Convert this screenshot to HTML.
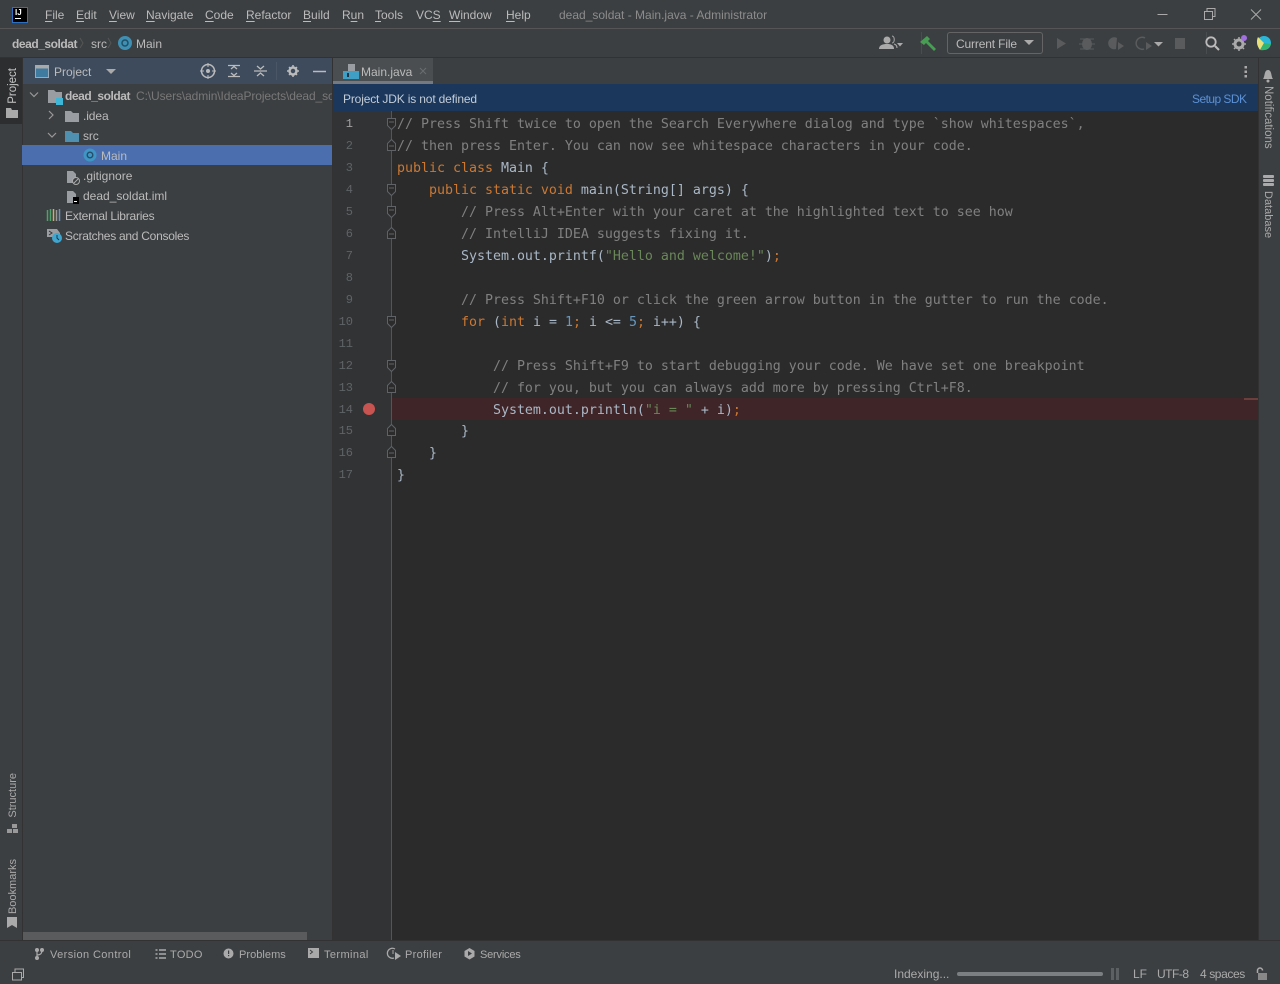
<!DOCTYPE html>
<html><head><meta charset="utf-8"><style>
html,body{margin:0;padding:0;background:#3c3f41}
#r{position:relative;width:1280px;height:984px;overflow:hidden;background:#3c3f41;font-family:"Liberation Sans",sans-serif;font-size:12px;color:#bbb}
.a{position:absolute}
.t{position:absolute;white-space:pre;line-height:16px}
.m u{text-underline-offset:2px}
.c{position:absolute;left:397px;white-space:pre;font-family:"DejaVu Sans Mono",monospace;font-size:13.29px;line-height:22px;height:22px;color:#a9b7c6}
.n{position:absolute;left:333px;width:20px;text-align:right;font-family:"Liberation Mono",monospace;font-size:12px;line-height:22px;color:#606366}
.g{color:#808080}.k{color:#cc7832}.s{color:#6a8759}.d{color:#6897bb}
.v{position:absolute;writing-mode:vertical-rl;white-space:pre;font-size:11.5px;line-height:14px;color:#aaa}
.l{transform:rotate(180deg)}
.b{font-size:11px;letter-spacing:.3px;color:#aaa;top:947px}
svg{position:absolute;overflow:visible}
</style></head><body><div id="r">

<!-- title bar -->
<div class="a" style="left:0;top:0;width:1280px;height:28px;background:#3c3f41"></div>
<div class="a" style="left:0;top:28px;width:1280px;height:1px;background:#555"></div>
<div class="a" style="left:12px;top:7px;width:14px;height:14px;background:#000;border:1px solid #2d6fc0"></div>
<div class="a" style="left:15px;top:8px;color:#fff;font:bold 8px/10px 'Liberation Sans',sans-serif">IJ</div>
<div class="a" style="left:15px;top:18px;width:6px;height:1px;background:#fff"></div>
<div class="m">
<div class="t" style="left:45px;top:7px"><u>F</u>ile</div>
<div class="t" style="left:76px;top:7px"><u>E</u>dit</div>
<div class="t" style="left:109px;top:7px"><u>V</u>iew</div>
<div class="t" style="left:146px;top:7px"><u>N</u>avigate</div>
<div class="t" style="left:205px;top:7px"><u>C</u>ode</div>
<div class="t" style="left:246px;top:7px"><u>R</u>efactor</div>
<div class="t" style="left:303px;top:7px"><u>B</u>uild</div>
<div class="t" style="left:342px;top:7px">R<u>u</u>n</div>
<div class="t" style="left:375px;top:7px"><u>T</u>ools</div>
<div class="t" style="left:416px;top:7px">VC<u>S</u></div>
<div class="t" style="left:449px;top:7px"><u>W</u>indow</div>
<div class="t" style="left:506px;top:7px"><u>H</u>elp</div>
</div>
<div class="t" style="left:559px;top:7px;color:#8c8c8c;font-size:12px">dead_soldat - Main.java - Administrator</div>
<svg style="left:0;top:0" width="1280" height="28" fill="none" stroke="#aaa">
<path d="M1157.500 14.500h10"/><path d="M1204.500 11.500h8v8h-8zM1207 11v-2.500h8v8h-2.500"/><path d="M1251 9.500l10 10M1261 9.500l-10 10"/>
</svg>

<!-- nav bar -->
<div class="t" style="left:12px;top:36px;font-weight:bold;font-size:12px;letter-spacing:-.45px;color:#bbb">dead_soldat</div>
<div class="t" style="left:91px;top:36px;font-size:12px">src</div>
<svg style="left:0;top:29px" width="130" height="28" fill="none" stroke="#555"><path d="M80 9l3 5-3 5M108 9l3 5-3 5"/></svg>
<svg style="left:118px;top:36px" width="14" height="14"><circle cx="7" cy="7" r="7" fill="#3f8fb3"/><circle cx="7" cy="7" r="3" fill="none" stroke="#1f4f66" stroke-width="1.500"/></svg>
<div class="t" style="left:136px;top:36px">Main</div>
<div class="a" style="left:0;top:57px;width:1280px;height:1px;background:#323232"></div>

<!-- toolbar -->
<svg style="left:870px;top:29px" width="410" height="28">
<circle cx="17" cy="11" r="3.500" fill="#aaa"/><path d="M9 20c0-4 4-5 8-5s7 1 7 5z" fill="#aaa"/><path d="M22 7c3 0 3 7 0 7M24 15c2 .5 3 2 3 4" stroke="#aaa" fill="none"/>
<path d="M27 14h6l-3 3.500z" fill="#aaa"/>
<rect x="51" y="3" width="1" height="22" fill="#4a4d4f"/>
<path d="M50 13l7-6 3 3-2 2 8 8-2 2-8-8-2 2z" fill="#499c54"/>
<rect x="77.500" y="3.500" width="95" height="21" rx="2.500" fill="none" stroke="#646464"/>
<path d="M154 11h10l-5 5z" fill="#aaa"/>
<path d="M187 9l9 5.500-9 5.500z" fill="#595b5d"/>
<ellipse cx="217" cy="15" rx="5" ry="6" fill="#595b5d"/><path d="M210 10l14 0M209 15h16M210 20h14" stroke="#595b5d"/>
<path d="M247 9a6 6 0 1 0-1 11z" fill="#595b5d"/><path d="M248 13l6 4-6 4z" fill="#595b5d"/>
<path d="M275 9a6 6 0 1 0-1 11" fill="none" stroke="#595b5d" stroke-width="1.500"/><path d="M276 13l6 4-6 4z" fill="#595b5d"/>
<path d="M284 13h9l-4.500 4.500z" fill="#aaa"/>
<rect x="305" y="9" width="10" height="11" fill="#595b5d"/>
<rect x="336" y="3" width="1" height="22" fill="#4a4d4f"/>
<circle cx="341" cy="13" r="4.700" fill="none" stroke="#bbb" stroke-width="1.800"/><path d="M345 17l4 4" stroke="#bbb" stroke-width="2"/>
<circle cx="369" cy="15" r="4" fill="none" stroke="#aaa" stroke-width="3"/>
<path d="M369 8v3M369 19v3M362 15h3M373 15h3M364 10l2 2M372 18l2 2M364 20l2-2" stroke="#aaa" stroke-width="1.500"/>
<circle cx="374" cy="9" r="3" fill="#a26fe0"/>
<circle cx="394" cy="14" r="7" fill="#2bb6d8"/><path d="M388 8c-2 4-1 9 2 13l4-7z" fill="#e8e07a"/><path d="M394 14l7 1c-1 4-6 7-11 6z" fill="#32b56e"/>
</svg>
<div class="t" style="left:956px;top:36px;color:#bbb;font-size:12px;letter-spacing:-.15px">Current File</div>

<!-- left stripe -->
<div class="a" style="left:0;top:58px;width:22px;height:66px;background:#2c2e30"></div>
<div class="a" style="left:22px;top:58px;width:1px;height:882px;background:#323232"></div>
<div class="v l" style="left:6px;top:68px;color:#c8c8c8">Project</div>
<svg style="left:5px;top:107px" width="14" height="12"><path d="M1 1h5l1 2h6v8H1z" fill="#aaa"/></svg>
<div class="v l" style="left:6px;top:773px;font-size:11px">Structure</div>
<svg style="left:6px;top:823px" width="12" height="12" fill="#999"><rect x="6" y="1" width="5" height="4"/><rect x="1" y="6" width="5" height="4"/><rect x="7" y="6" width="5" height="4"/></svg>
<div class="v l" style="left:6px;top:859px;font-size:11px">Bookmarks</div>
<svg style="left:6px;top:917px" width="12" height="12"><path d="M1 0h10v11l-5-3-5 3z" fill="#aaa"/></svg>

<!-- project panel -->
<div class="a" style="left:23px;top:58px;width:309px;height:26px;background:#3d4b5c"></div>
<svg style="left:23px;top:58px" width="309" height="26" fill="none" stroke="#bbb">
<rect x="12.500" y="7.500" width="13" height="12" fill="#3f7ba0" stroke="#9ab"/><rect x="12.500" y="7.500" width="13" height="3" fill="#aaa" stroke="none"/>
<path d="M83 11h10l-5 5z" fill="#aaa" stroke="none"/>
<circle cx="185" cy="13" r="6.500" stroke-width="1.500"/><circle cx="185" cy="13" r="1.500" fill="#bbb"/><path d="M185 5v4M185 17v4M177 13h4M189 13h4"/>
<path d="M205 7.500h12M205 18.500h12M208 11l3-2.500 3 2.500M208 15l3 2.500 3-2.500" stroke-width="1.300"/>
<path d="M231 13h13M234 8l3.500 3 3.500-3M234 18l3.500-3 3.500 3" stroke-width="1.300"/>
<rect x="253" y="4" width="1" height="18" fill="#4a5566" stroke="none"/>
<circle cx="270" cy="13" r="3.500" stroke-width="2.500"/><path d="M270 7v2M270 17v2M264 13h2M274 13h2M266 9l1 1M273 16l1 1M266 17l1-1M273 10l1-1" stroke-width="1.500"/>
<path d="M290 13.500h13" stroke-width="1.500"/>
</svg>
<div class="t" style="left:54px;top:64px;font-size:12px;color:#bbb">Project</div>

<div class="a" style="left:332px;top:58px;width:1px;height:882px;background:#323232"></div>
<!-- tree -->
<svg style="left:23px;top:85px" width="309" height="160" fill="none" stroke="#999">
<path d="M7 7.500l4 4 4-4" stroke-width="1.200"/>
<path d="M25 5h6l2 2h6v11H25z" fill="#9a9ea3" stroke="none"/><rect x="33" y="13" width="7" height="7" fill="#3fb6d8" stroke="none"/>
<path d="M26 26l4 4-4 4" stroke-width="1.200"/>
<path d="M42 26h6l2 2h6v9H42z" fill="#9a9ea3" stroke="none"/>
<path d="M25 48l4 4 4-4" stroke-width="1.200"/>
<path d="M42 46h6l2 2h6v9H42z" fill="#4f8fb0" stroke="none"/>
<path d="M44 86h6l3 3v9H44z" fill="#9a9ea3" stroke="none"/><circle cx="53" cy="96" r="3.500" fill="#3c3f41" stroke="#aaa"/><path d="M51 98l4-4" stroke="#aaa"/>
<path d="M44 106h6l3 3v9H44z" fill="#9a9ea3" stroke="none"/><rect x="50" y="112" width="6" height="7" fill="#000" stroke="none"/><rect x="51" y="116" width="3" height="1" fill="#fff" stroke="none"/>
<path d="M24.500 125v11M27.500 124v12" stroke="#4f9f6f" stroke-width="1.500"/><path d="M30.500 124v12" stroke="#c9b267" stroke-width="1.500"/><path d="M33.500 125v11" stroke="#999" stroke-width="1.500"/><path d="M36.500 124v12" stroke="#6a93c4" stroke-width="1.500"/>
<path d="M24 144h10l3 4v4H24z" fill="#9a9ea3" stroke="none"/><path d="M26 146l3 2-3 2" stroke="#333"/><circle cx="34" cy="153" r="5" fill="#3fa6cf" stroke="none"/><path d="M34 150v3l2 2" stroke="#234"/>
</svg>
<div class="t" style="left:65px;top:88px;font-weight:bold;font-size:12px;letter-spacing:-.45px">dead_soldat</div>
<div class="t" style="left:136px;top:88px;width:196px;overflow:hidden;font-size:12px;letter-spacing:-.1px;color:#787878">C:\Users\admin\IdeaProjects\dead_soldat</div>
<div class="t" style="left:83px;top:108px;font-size:12px;letter-spacing:-.1px">.idea</div>
<div class="t" style="left:83px;top:128px;font-size:12px;letter-spacing:-.1px">src</div>
<div class="a" style="left:22px;top:145px;width:310px;height:20px;background:#4b6eaf"></div>
<svg style="left:83px;top:148px" width="14" height="14"><circle cx="7" cy="7" r="6.500" fill="#3f95c4"/><circle cx="7" cy="7" r="2.800" fill="none" stroke="#274d68" stroke-width="1.400"/></svg>
<div class="t" style="left:101px;top:148px;font-size:12px">Main</div>
<div class="t" style="left:83px;top:168px;font-size:12px">.gitignore</div>
<div class="t" style="left:83px;top:188px;font-size:12px">dead_soldat.iml</div>
<div class="t" style="left:65px;top:208px;font-size:12px;letter-spacing:-.22px">External Libraries</div>
<div class="t" style="left:65px;top:228px;font-size:12px;letter-spacing:-.27px">Scratches and Consoles</div>
<div class="a" style="left:23px;top:932px;width:284px;height:8px;background:#595b5d"></div>

<!-- tabs -->
<div class="a" style="left:333px;top:58px;width:925px;height:26px;background:#3c3f41"></div>
<div class="a" style="left:333px;top:58px;width:100px;height:23px;background:#4a4e50"></div>
<div class="a" style="left:333px;top:81px;width:100px;height:3px;background:#747a80"></div>
<svg style="left:342px;top:64px" width="18" height="16"><path d="M6 0h7v7H6z" fill="#9a9ea3"/><rect x="1" y="7" width="16" height="8" fill="#3f9fc4"/><rect x="5" y="9" width="2" height="4" fill="#234"/></svg>
<div class="t" style="left:361px;top:64px;font-size:12px">Main.java</div>
<svg style="left:419px;top:67px" width="8" height="8" fill="none" stroke="#6a6d70"><path d="M1 1l6 6M7 1l-6 6"/></svg>
<svg style="left:1243px;top:65px" width="6" height="14" fill="#aaa"><rect x="1.500" y="1" width="2.500" height="2.500"/><rect x="1.500" y="5.500" width="2.500" height="2.500"/><rect x="1.500" y="10" width="2.500" height="2.500"/></svg>

<!-- notification -->
<div class="a" style="left:333px;top:84px;width:925px;height:27px;background:#1b385c"></div>
<div class="t" style="left:343px;top:91px;font-size:12px;letter-spacing:-.16px;color:#c4ccd6">Project JDK is not defined</div>
<div class="t" style="left:1192px;top:91px;font-size:12px;letter-spacing:-.55px;color:#5c90d6">Setup SDK</div>

<!-- editor -->
<div class="a" style="left:333px;top:111px;width:925px;height:829px;background:#2b2b2b"></div>
<div class="a" style="left:333px;top:111px;width:58px;height:829px;background:#313335"></div>
<div class="a" style="left:391px;top:111px;width:1px;height:829px;background:#555"></div>
<div class="a" style="left:392px;top:398px;width:866px;height:22px;background:#3f2527"></div>
<div class="a" style="left:1244px;top:398px;width:14px;height:2px;background:#6b3f3c"></div>
<div class="a" style="left:363px;top:403px;width:12px;height:12px;border-radius:50%;background:#c75450"></div>

<div class="n" style="top:113px;color:#a4a3a3">1</div><div class="n" style="top:135px">2</div><div class="n" style="top:157px">3</div><div class="n" style="top:179px">4</div><div class="n" style="top:201px">5</div><div class="n" style="top:223px">6</div><div class="n" style="top:245px">7</div><div class="n" style="top:267px">8</div><div class="n" style="top:289px">9</div><div class="n" style="top:311px">10</div><div class="n" style="top:333px">11</div><div class="n" style="top:355px">12</div><div class="n" style="top:377px">13</div><div class="n" style="top:399px">14</div><div class="n" style="top:420px">15</div><div class="n" style="top:442px">16</div><div class="n" style="top:464px">17</div>

<svg style="left:0;top:0" width="400" height="480" fill="#2b2b2b" stroke="#606366">
<path d="M387.500 118.500h8v7l-4 4-4-4z"/><path d="M389 122h5"/>
<path d="M387.500 184.500h8v7l-4 4-4-4z"/><path d="M389 188h5"/>
<path d="M387.500 206.500h8v7l-4 4-4-4z"/><path d="M389 210h5"/>
<path d="M387.500 316.500h8v7l-4 4-4-4z"/><path d="M389 320h5"/>
<path d="M387.500 360.500h8v7l-4 4-4-4z"/><path d="M389 364h5"/>
<path d="M387.500 150.500v-7l4-4 4 4v7z"/><path d="M389 146h5"/>
<path d="M387.500 238.500v-7l4-4 4 4v7z"/><path d="M389 234h5"/>
<path d="M387.500 392.500v-7l4-4 4 4v7z"/><path d="M389 388h5"/>
<path d="M387.500 435.500v-7l4-4 4 4v7z"/><path d="M389 431h5"/>
<path d="M387.500 457.500v-7l4-4 4 4v7z"/><path d="M389 453h5"/>
</svg>

<div class="c g" style="top:114px">// Press Shift twice to open the Search Everywhere dialog and type `show whitespaces`,</div>
<div class="c g" style="top:136px">// then press Enter. You can now see whitespace characters in your code.</div>
<div class="c" style="top:158px"><span class="k">public class</span> Main {</div>
<div class="c" style="top:180px">    <span class="k">public static void</span> main(String[] args) {</div>
<div class="c g" style="top:202px">        // Press Alt+Enter with your caret at the highlighted text to see how</div>
<div class="c g" style="top:224px">        // IntelliJ IDEA suggests fixing it.</div>
<div class="c" style="top:246px">        System.out.printf(<span class="s">"Hello and welcome!"</span>)<span class="k">;</span></div>
<div class="c g" style="top:290px">        // Press Shift+F10 or click the green arrow button in the gutter to run the code.</div>
<div class="c" style="top:312px">        <span class="k">for</span> (<span class="k">int</span> i = <span class="d">1</span><span class="k">;</span> i &lt;= <span class="d">5</span><span class="k">;</span> i++) {</div>
<div class="c g" style="top:356px">            // Press Shift+F9 to start debugging your code. We have set one breakpoint</div>
<div class="c g" style="top:378px">            // for you, but you can always add more by pressing Ctrl+F8.</div>
<div class="c" style="top:400px">            System.out.println(<span class="s">"i = "</span> + i)<span class="k">;</span></div>
<div class="c" style="top:421px">        }</div>
<div class="c" style="top:443px">    }</div>
<div class="c" style="top:465px">}</div>

<!-- right stripe -->
<div class="a" style="left:1258px;top:58px;width:1px;height:882px;background:#323232"></div>
<svg style="left:1262px;top:69px" width="12" height="14"><path d="M1 10c2-2 1-9 5-9s3 7 5 9z" fill="#aaa"/><circle cx="6" cy="12" r="1.500" fill="#aaa"/></svg>
<div class="v" style="left:1261px;top:86px;font-size:11.500px">Notifications</div>
<svg style="left:1263px;top:174px" width="11" height="14" fill="#aaa"><rect x="0" y="1" width="11" height="3" rx="1"/><rect x="0" y="5" width="11" height="3" rx="1"/><rect x="0" y="9" width="11" height="3" rx="1"/></svg>
<div class="v" style="left:1261px;top:191px;font-size:11px">Database</div>

<!-- bottom tool bar -->
<div class="a" style="left:0;top:940px;width:1280px;height:1px;background:#323232"></div>
<svg style="left:0;top:941px" width="540" height="43" fill="none" stroke="#aaa">
<circle cx="37" cy="9" r="1.500" fill="#aaa"/><circle cx="37" cy="17" r="1.500" fill="#aaa"/><circle cx="42" cy="9" r="1.500" fill="#aaa"/><path d="M37 9v8M37 14c3 0 5-1 5-5" stroke-width="1.200"/>
<path d="M155.500 9h2M155.500 13h2M155.500 17h2M159 9h7M159 13h7M159 17h7" stroke-width="1.500"/>
<circle cx="228.500" cy="12.500" r="5" fill="#aaa" stroke="none"/><rect x="228" y="9.500" width="1.200" height="3.500" fill="#3c3f41" stroke="none"/><rect x="228" y="14" width="1.200" height="1.200" fill="#3c3f41" stroke="none"/>
<rect x="308" y="7" width="11" height="10" fill="#aaa" stroke="none"/><path d="M310 9l2.500 2-2.500 2" stroke="#3c3f41"/>
<path d="M395 8a5 5 0 1 0-1 9" stroke-width="1.300"/><path d="M395 11l6 4-6 4z" fill="#aaa" stroke="none"/><path d="M393 9v4"/>
<path d="M469.500 7l5 3v5.500l-5 3-5-3V10z" fill="#aaa" stroke="none"/><path d="M468 10l4 2.500-4 2.500z" fill="#3c3f41" stroke="none"/>
<rect x="12.500" y="31.500" width="9" height="7.500"/><path d="M15 31v-3h8.500v8.500H22"/>
</svg>
<div class="t b" style="left:50px;letter-spacing:.4px">Version Control</div>
<div class="t b" style="left:170px">TODO</div>
<div class="t b" style="left:239px;letter-spacing:.05px">Problems</div>
<div class="t b" style="left:324px;letter-spacing:.4px">Terminal</div>
<div class="t b" style="left:405px;letter-spacing:.3px">Profiler</div>
<div class="t b" style="left:480px;letter-spacing:-.2px">Services</div>

<!-- status bar -->
<div class="t" style="left:894px;top:966px;font-size:12px;color:#aaa">Indexing...</div>
<div class="a" style="left:957px;top:972px;width:146px;height:4px;border-radius:2px;background:#7c7f81"></div>
<div class="a" style="left:1111px;top:968px;width:3px;height:12px;background:#5d6062"></div>
<div class="a" style="left:1116px;top:968px;width:3px;height:12px;background:#5d6062"></div>
<div class="t" style="left:1133px;top:966px;font-size:12px;color:#aaa">LF</div>
<div class="t" style="left:1157px;top:966px;font-size:12px;letter-spacing:-.5px;color:#aaa">UTF-8</div>
<div class="t" style="left:1200px;top:966px;font-size:12px;letter-spacing:-.4px;color:#aaa">4 spaces</div>
<svg style="left:1255px;top:967px" width="14" height="14" fill="none"><path d="M2.500 6V3.500a2.500 2.500 0 0 1 5 0" stroke="#aaa" stroke-width="1.500"/><rect x="3" y="6" width="9" height="7" fill="#888"/></svg>

</div></body></html>
